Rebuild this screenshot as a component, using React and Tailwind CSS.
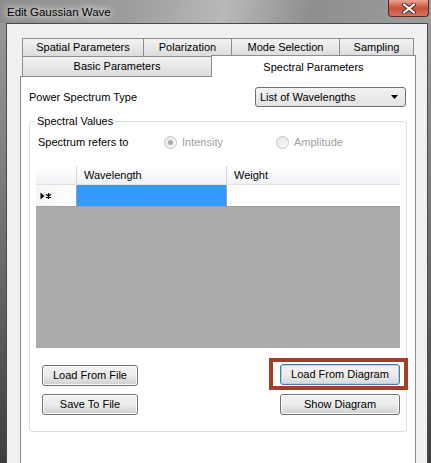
import React from 'react';

const font = { fontFamily: '"Liberation Sans", Arial, sans-serif' };

const Tab = ({ label, className }) => (
  <div
    className={`flex items-center justify-center border border-b-0 border-[#898c95] bg-gradient-to-b from-[#f3f3f3] to-[#dcdcdc] text-[11px] text-black ${className}`}
  >
    {label}
  </div>
);

const Button = ({ label, focused }) => (
  <div
    className={
      focused
        ? 'flex h-[21px] w-[120px] items-center justify-center rounded-[3px] border border-[#3c7fb1] bg-gradient-to-b from-[#f4f4f4] via-[#ececec] via-50% to-[#d8d8d8] text-[11px] text-black shadow-[inset_0_0_0_1px_#9fd8f8]'
        : 'flex h-[21px] items-center justify-center rounded-[3px] border border-[#707070] bg-gradient-to-b from-[#f2f2f2] via-[#ebebeb] via-50% to-[#cfcfcf] text-[11px] text-black shadow-[inset_0_0_0_1px_#fcfcfc]'
    }
  >
    {label}
  </div>
);

const Radio = ({ checked }) => (
  <div className="flex h-[13px] w-[13px] items-center justify-center rounded-full border border-[#c4c4c4] bg-gradient-to-br from-[#e6e6e6] to-[#fafafa]">
    {checked && <div className="h-[5px] w-[5px] rounded-full bg-[#a8a8a8]" />}
  </div>
);

export default function App() {
  return (
    <div
      style={font}
      className="flex h-[463px] w-[431px] flex-col overflow-hidden bg-[linear-gradient(180deg,#9c9c9c_0%,#7a7a7a_40%,#3e3e3e_100%)]"
    >
      {/* title bar */}
      <div className="flex h-[23px] shrink-0 items-start justify-between bg-[linear-gradient(100deg,#8c8c8c_0%,#9c9c9c_30%,#b9b9b9_52%,#8e8e8e_72%,#9d9d9d_100%)]">
        <div className="pl-[7px] pt-[4px] text-[11.5px] text-black [text-shadow:0_0_6px_#ffffff,0_0_10px_#ffffff]">
          Edit Gaussian Wave
        </div>
        <div className="mr-[2px] flex h-[17px] w-[41px] items-center justify-center rounded-b-[4px] border border-t-0 border-[#5a2a20] bg-gradient-to-b from-[#e9a494] via-[#c8503a] via-50% to-[#d7735f]">
          <svg width="14" height="11" viewBox="0 0 14 11">
            <path d="M2 1.5 L12 9.5 M12 1.5 L2 9.5" stroke="#4a2a25" strokeWidth="4" strokeLinecap="round" />
            <path d="M2 1.5 L12 9.5 M12 1.5 L2 9.5" stroke="#ffffff" strokeWidth="2.2" strokeLinecap="round" />
          </svg>
        </div>
      </div>

      {/* client */}
      <div className="flex flex-1 pl-[6px] pr-[3px]">
        <div className="flex-1 border border-b-0 border-[#4a4a4a] bg-[#f0f0f0] pl-[13px] pt-[14px]">
          <div className="w-[396px]">
            {/* tab headers */}
            <div className="ml-[2px] flex h-[18px]">
              <Tab label="Spatial Parameters" className="w-[122px]" />
              <Tab label="Polarization" className="-ml-px w-[89px]" />
              <Tab label="Mode Selection" className="-ml-px w-[109px]" />
              <Tab label="Sampling" className="-ml-px w-[75px]" />
            </div>
            <div className="flex h-[20px] items-end">
              <Tab label="Basic Parameters" className="ml-[2px] h-[20px] w-[190px]" />
              <div className="relative z-10 -mb-px -ml-px flex h-[22px] w-[205px] items-start justify-center border border-b-0 border-[#898c95] bg-white pt-[3px] text-[11px] text-black">
                Spectral Parameters
              </div>
            </div>

            {/* panel */}
            <div className="h-[400px] border border-[#898c95] bg-white pt-[10px] text-[11px] text-black">
              <div className="flex items-center justify-between pl-[8px] pr-[9px]">
                <span>Power Spectrum Type</span>
                <div className="flex h-[20px] w-[151px] items-center justify-between rounded-[3px] border border-[#707070] bg-gradient-to-b from-[#f2f2f2] to-[#e3e3e3] pl-[4px] pr-[7px]">
                  <span>List of Wavelengths</span>
                  <svg width="7" height="4" viewBox="0 0 7 4">
                    <path d="M0 0 H7 L3.5 4 Z" fill="#000" />
                  </svg>
                </div>
              </div>

              {/* group box */}
              <div className="relative ml-[8px] mt-[14px] h-[311px] w-[378px] rounded-[3px] border border-[#d5dfe5] px-[6px] pt-[13px]">
                <span className="absolute -top-[8px] left-[5px] bg-white px-[2px] leading-[14px]">Spectral Values</span>

                <div className="flex h-[14px] items-center pl-[2px]">
                  <span className="w-[126px]">Spectrum refers to</span>
                  <div className="flex w-[112px] items-center gap-[5px] text-[#a0a0a0]">
                    <Radio checked />
                    <span>Intensity</span>
                  </div>
                  <div className="flex items-center gap-[5px] text-[#a0a0a0]">
                    <Radio />
                    <span>Amplitude</span>
                  </div>
                </div>

                {/* grid */}
                <div className="mt-[17px] h-[182px] w-[364px] bg-[#ababab]">
                  <div className="flex h-[19px] border-b border-[#e0e0e0] bg-gradient-to-b from-[#ffffff] to-[#f1f2f5]">
                    <div className="w-[41px] border-r border-[#d5d5d5]" />
                    <div className="flex w-[150px] items-center border-r border-[#d5d5d5] pl-[7px]">Wavelength</div>
                    <div className="flex flex-1 items-center pl-[7px]">Weight</div>
                  </div>
                  <div className="flex h-[22px] border-b border-[#a0a0a0]">
                    <div className="flex w-[41px] items-center border-r border-[#a0a0a0] bg-gradient-to-r from-[#f4f5f7] to-[#ffffff] pl-[4px]">
                      <svg width="12" height="8" viewBox="0 0 12 8">
                        <path d="M0.5 0.5 L4.5 4 L0.5 7.5 Z" fill="#000" />
                        <path d="M8.5 1 V7 M5.8 2.5 L11.2 5.5 M11.2 2.5 L5.8 5.5" stroke="#000" strokeWidth="1.3" />
                      </svg>
                    </div>
                    <div className="w-[150px] border-r border-[#a0a0a0] bg-[#3399ff]" />
                    <div className="flex-1 bg-white" />
                  </div>
                </div>

                {/* buttons */}
                <div className="mt-[17px] flex justify-between pl-[6px]">
                  <div className="flex w-[96px] flex-col gap-[8px]">
                    <Button label="Load From File" />
                    <Button label="Save To File" />
                  </div>
                  <div className="-mt-px flex w-[120px] flex-col gap-[8px]">
                    <div className="relative">
                      <Button label="Load From Diagram" focused />
                      <div className="absolute -bottom-[5px] -left-[11px] -right-[8px] -top-[6px] border-[4px] border-[#a63d2a]" />
                    </div>
                    <div className="mt-px">
                      <Button label="Show Diagram" />
                    </div>
                  </div>
                </div>
              </div>
            </div>
          </div>
        </div>
      </div>
    </div>
  );
}
